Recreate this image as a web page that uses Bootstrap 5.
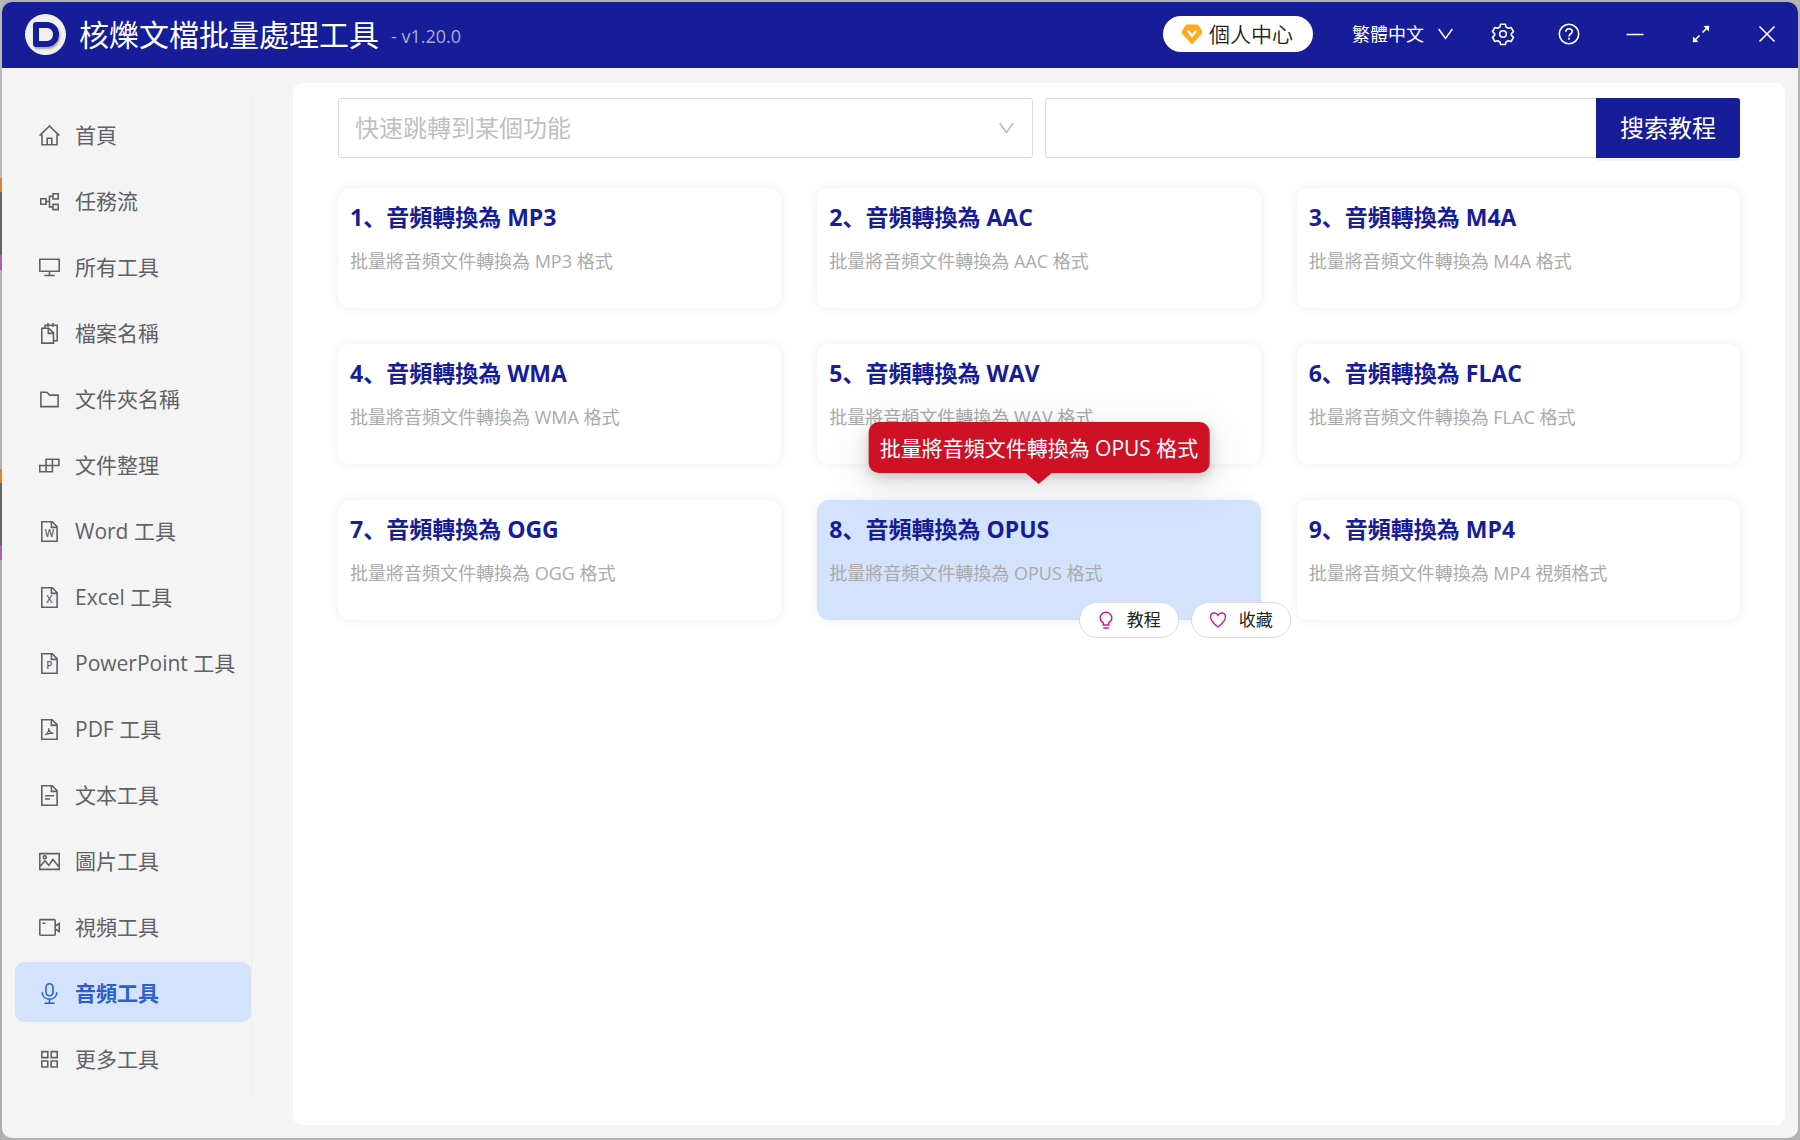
<!DOCTYPE html>
<html lang="zh">
<head>
<meta charset="utf-8">
<meta name="viewport" content="width=device-width, initial-scale=1">
<title>核爍文檔批量處理工具</title>
<link rel="stylesheet" href="https://cdn.jsdelivr.net/npm/bootstrap@5.3.0/dist/css/bootstrap.min.css">
<style>
  :root { --navy: #171c98; --soft-blue: #d3e2fd; --active-blue: #2b5fce; }
  body {
    font-family: "Open Sans", "Noto Sans CJK SC", "Noto Sans CJK TC", sans-serif;
    padding: 2px;
    color: #222;
    background: linear-gradient(#b8b8b8 0 178px, #e08030 178px 192px, #5f666c 192px 255px, #a860a8 255px 270px, #b2b2b2 270px 469px, #e08030 469px 483px, #5f666c 483px 545px, #a860a8 545px 560px, #adadad 560px) left / 2px 100% no-repeat, #b3b3b3;
  }
  svg { fill: none; stroke: currentColor; display: block; flex: none; }
  .app-window { min-height: calc(100vh - 4px); background: #f4f4f4; border-radius: 10px; overflow: hidden; }
  .title-bar { height: 66px; background: var(--navy); padding: 0 19px 2px 23px; }
  .logo-disc { width: 41px; height: 41px; background: #f0f0f0; }
  .logo-mark { width: 26px; height: 25px; border: 6px solid var(--navy); border-radius: 3px 12px 12px 3px; box-shadow: 1px 2px 2px #aaa; }
  .app-name { font-size: 30px; line-height: 42px; margin-left: 13px; padding-top: 2px; }
  .app-version { font-size: 18px; line-height: 24px; margin-left: 12px; padding-top: 4px; color: #a9acd8; }
  .member-btn { height: 36px; padding: 0 20px 0 19px; font-size: 21px; line-height: 30px; font-weight: 350; gap: 7px; border: 0; background: #fff; color: #222; }
  .lang-btn { font-size: 18px; line-height: 24px; gap: 14px; margin: 0 38px 0 39px; }
  .bar-tools { gap: 42px; }
  .bare-btn { background: none; border: 0; padding: 0; color: #fff; }
  .tool-btn { width: 24px; height: 24px; }
  .side-nav { width: 237px; margin: 30px 41px 0 13px; border-right: 1px solid #ececec; align-self: flex-start; padding-top: 6px; }
  .side-nav .nav-link { height: 60px; padding: 2px 8px 0 24px; gap: 15px; margin-bottom: 6px; font-size: 21px; line-height: 30px; color: #5f6166; border-radius: 9px; white-space: nowrap; }
  .side-nav .nav-link svg { stroke-width: 1.6; color: #5f6166; }
  .side-nav .nav-link.active { background: var(--soft-blue); color: var(--active-blue); font-weight: 700; }
  .side-nav .nav-link.active svg { color: var(--active-blue); }
  .main-panel { background: #fff; border-radius: 9px; margin: 15px 13px 13px 0; padding: 15px 45px; min-width: 0; }
  .search-row { gap: 12px; margin-bottom: 30px; }
  .search-row > * { flex: 1 1 50%; min-width: 0; }
  .search-row .form-select, .search-row .form-control { height: 60px; font-size: 24px; line-height: 34px; border: 1px solid #d9d9d9; border-radius: 3px; }
  .search-row .form-select {
    color: #bfbfbf; font-weight: 400; padding: 0 48px 0 16px;
    background-image: url("data:image/svg+xml,%3Csvg xmlns='http://www.w3.org/2000/svg' viewBox='0 0 15 12'%3E%3Cpath d='M.7 1l6.8 9.5L14.3 1' fill='none' stroke='%23b8b8b8' stroke-width='1.5'/%3E%3C/svg%3E");
    background-size: 15px 12px; background-position: right 18px center;
  }
  .search-row .btn { width: 144px; height: 60px; padding: 0; font-size: 24px; line-height: 34px; background: var(--navy); border: 0; border-radius: 0 3px 3px 0; color: #fff; box-shadow: 0 3px 0 #f5f5f5; }
  .tool-grid { --bs-gutter-x: 36px; --bs-gutter-y: 36px; }
  .tool-card { height: 120px; border: 0; border-radius: 12px; padding: 12px; box-shadow: 0 0 12px rgba(0,0,0,.07); }
  .tool-card h2 { font-size: 23px; line-height: 34px; font-weight: 700; color: var(--navy); margin: 0 0 13px; }
  .tool-card p { font-size: 18px; line-height: 28px; color: #aaa; margin: 0; }
  .tool-card.hovered { background: var(--soft-blue); }
  .card-actions { position: absolute; right: -30px; bottom: -18px; gap: 12px; z-index: 2; }
  .card-actions .btn { width: 100px; height: 36px; padding: 0; gap: 12px; font-size: 17px; line-height: 24px; border: 1px solid #d9d9d9; background: #fff; color: #222; }
  .card-actions svg { color: #c9189b; stroke-width: 1.4; }
  .red-tip { position: absolute; left: 50%; bottom: calc(100% + 27px); transform: translateX(-50%); height: 51px; padding: 0 11px; border-radius: 10px; background: #cf1126; color: #fff; font-size: 21px; line-height: 52px; white-space: nowrap; z-index: 3; box-shadow: 0 9px 42px 12px rgba(0,0,0,.05), 0 9px 24px rgba(0,0,0,.10), 0 4px 9px rgba(0,0,0,.10); }
  .red-tip::after { content: ""; position: absolute; left: 50%; top: 100%; margin-left: -13px; border: 13px solid transparent; border-top: 11px solid #cf1126; border-bottom: 0; }
  .file-letter { font: 600 10px "Open Sans", sans-serif; fill: currentColor; stroke: none; text-anchor: middle; }
</style>
</head>
<body>
<svg width="0" height="0" class="position-absolute" aria-hidden="true">
  <symbol id="page" viewBox="0 0 21 21"><path d="M2.8.8h10.4l4.9 4.9v14.5H2.8zM12.4.8v5.6h5.7"/></symbol>
</svg>
<div class="app-window d-flex flex-column">
  <header class="title-bar d-flex align-items-center text-white">
    <span class="logo-disc rounded-circle d-flex align-items-center justify-content-center"><span class="logo-mark"></span></span>
    <span class="app-name">核爍文檔批量處理工具</span>
    <span class="app-version">- v1.20.0</span>
    <button type="button" class="member-btn btn rounded-pill d-flex align-items-center ms-auto">
      <svg width="20" height="20" viewBox="0 0 20 20" aria-hidden="true"><path d="M4.2.5h11.6L20 6.6v3L10.4 20h-.8L0 9.6v-3z" fill="#ffa91f" stroke="none"/><path d="M5.8 6.8l4.2 5 4.2-5" stroke="#fff" stroke-width="2.4"/></svg>
      個人中心
    </button>
    <button type="button" class="bare-btn lang-btn d-flex align-items-center">繁體中文
      <svg width="15" height="12" viewBox="0 0 15 12" stroke-width="1.5" aria-hidden="true"><path d="M.7 1l6.8 9.5L14.3 1"/></svg>
    </button>
    <div class="bar-tools d-flex">
      <button type="button" class="bare-btn tool-btn" aria-label="設置"><svg width="24" height="24" viewBox="0 0 24 24" stroke-width="1.6" stroke-linejoin="round" aria-hidden="true"><circle cx="12" cy="12" r="3.3"/><path d="M9.6 2.2h4.8l.7 2.8 2.2 1.3 2.8-.8 2.4 4.1-2.1 2v1.8l2.1 2-2.4 4.1-2.8-.8-2.2 1.3-.7 2.5H9.6L8.9 20l-2.2-1.3-2.8.8-2.4-4.1 2.1-2v-1.8l-2.1-2 2.4-4.1 2.8.8L8.9 5z"/></svg></button>
      <button type="button" class="bare-btn tool-btn" aria-label="幫助"><svg width="24" height="24" viewBox="0 0 24 24" stroke-width="1.6" aria-hidden="true"><circle cx="12" cy="12" r="9.7"/><path d="M8.8 9.8c0-1.9 1.4-3 3.2-3s3.2 1.1 3.2 2.8c0 2.4-3.2 2.4-3.2 4.8M12 15.7v2"/></svg></button>
      <button type="button" class="bare-btn tool-btn" aria-label="最小化"><svg width="24" height="24" viewBox="0 0 24 24" stroke-width="1.6" aria-hidden="true"><path d="M3.5 12.5h17"/></svg></button>
      <button type="button" class="bare-btn tool-btn" aria-label="最大化"><svg width="24" height="24" viewBox="0 0 24 24" stroke-width="1.6" aria-hidden="true"><path d="M13.5 10.5l5-5M10.5 13.5l-5 5"/><path d="M14.5 4l5.7-.3-.3 5.8zM9.5 20l-5.7.3.3-5.8z" fill="currentColor" stroke="none"/></svg></button>
      <button type="button" class="bare-btn tool-btn" aria-label="關閉"><svg width="24" height="24" viewBox="0 0 24 24" stroke-width="1.6" aria-hidden="true"><path d="M4.5 4.5l15 15M19.5 4.5l-15 15"/></svg></button>
    </div>
  </header>

  <div class="d-flex flex-grow-1">
    <nav class="side-nav nav flex-column flex-shrink-0">
      <a href="#" class="nav-link d-flex align-items-center"><svg width="21" height="21" viewBox="0 0 21 21"><path d="M.6 10.6L10.5 1l9.9 9.6M3 9.5v10.3h15V9.5M8.2 19.8v-6.6h4.6v6.6"/></svg>首頁</a>
      <a href="#" class="nav-link d-flex align-items-center"><svg width="21" height="21" viewBox="0 0 21 21"><path d="M1.8 7.8H7v5.4H1.8zM14 2.8h5.2V8H14zM14 13.4h5.2v5.2H14zM7 10.5h3M14 5.3h-3.5v10.6H14"/></svg>任務流</a>
      <a href="#" class="nav-link d-flex align-items-center"><svg width="21" height="21" viewBox="0 0 21 21"><path d="M.8 2.3h19.4v12H.8zM10.5 14.3v4M5.3 18.5h10.4"/></svg>所有工具</a>
      <a href="#" class="nav-link d-flex align-items-center"><svg width="21" height="21" viewBox="0 0 21 21"><path d="M2.8 5.2h7l4.7 4.7v10.2H2.8zM9.3 5.2v5.2h5.2M6 5V2.2h12.2v15.5h-3.7M9 0v4M14 0v4"/></svg>檔案名稱</a>
      <a href="#" class="nav-link d-flex align-items-center"><svg width="21" height="21" viewBox="0 0 21 21"><path d="M1.9 3.2h5.9l3 2.9h8.3v11.5H1.9z"/></svg>文件夾名稱</a>
      <a href="#" class="nav-link d-flex align-items-center"><svg width="21" height="21" viewBox="0 0 21 21"><path d="M.8 10.5h12.6v6.3H.8zM7.1 4.2h12.8v6.3H7.1zM7.1 10.5v6.3M13.4 4.2v6.3"/></svg>文件整理</a>
      <a href="#" class="nav-link d-flex align-items-center"><svg width="21" height="21" viewBox="0 0 21 21"><use href="#page"/><text class="file-letter" x="10.4" y="16">W</text></svg>Word 工具</a>
      <a href="#" class="nav-link d-flex align-items-center"><svg width="21" height="21" viewBox="0 0 21 21"><use href="#page"/><text class="file-letter" x="10.4" y="16">X</text></svg>Excel 工具</a>
      <a href="#" class="nav-link d-flex align-items-center"><svg width="21" height="21" viewBox="0 0 21 21"><use href="#page"/><text class="file-letter" x="10.4" y="16">P</text></svg>PowerPoint 工具</a>
      <a href="#" class="nav-link d-flex align-items-center"><svg width="21" height="21" viewBox="0 0 21 21"><use href="#page"/><path stroke-width="1.3" d="M9.8 9c.3 3-1 5.5-3.8 7M9.9 10.8c.6 2 2 3.5 4.6 3.6-3-.3-5 .1-7 .8"/></svg>PDF 工具</a>
      <a href="#" class="nav-link d-flex align-items-center"><svg width="21" height="21" viewBox="0 0 21 21"><use href="#page"/><path d="M6 10.7h9M6 14h5"/></svg>文本工具</a>
      <a href="#" class="nav-link d-flex align-items-center"><svg width="21" height="21" viewBox="0 0 21 21"><path d="M.8 2.6h19.4v15.8H.8zM1.5 15l4.4-5.3 4 4.7 4-6 5.6 6.8"/><circle cx="5.8" cy="6.3" r="1.5"/></svg>圖片工具</a>
      <a href="#" class="nav-link d-flex align-items-center"><svg width="21" height="21" viewBox="0 0 21 21"><rect x=".8" y="2.6" width="15.4" height="15.6" rx="1"/><path d="M3.5 6.3h3M16.2 9l4-2.5v8L16.2 12"/></svg>視頻工具</a>
      <a href="#" class="nav-link active d-flex align-items-center" aria-current="page"><svg width="21" height="21" viewBox="0 0 21 21"><rect x="7" y=".8" width="7" height="12" rx="3.5"/><path d="M3.2 9.2c0 4.2 3 7 7.3 7s7.3-2.8 7.3-7M10.5 16.2v4M5.5 20.2h10"/></svg>音頻工具</a>
      <a href="#" class="nav-link d-flex align-items-center"><svg width="21" height="21" viewBox="0 0 21 21"><path d="M2.8 2.6h6v6h-6zM12.2 2.6h6v6h-6zM2.8 12h6v6h-6zM12.2 12h6v6h-6z"/></svg>更多工具</a>
    </nav>

    <main class="main-panel flex-grow-1">
      <div class="search-row d-flex">
        <select class="form-select" aria-label="快速跳轉到某個功能"><option>快速跳轉到某個功能</option></select>
        <form class="input-group flex-nowrap">
          <input type="text" class="form-control" aria-label="搜索教程">
          <button type="button" class="btn">搜索教程</button>
        </form>
      </div>
      <div class="tool-grid row row-cols-3">
        <div class="col"><article class="tool-card card"><h2>1、音頻轉換為 MP3</h2><p>批量將音頻文件轉換為 MP3 格式</p></article></div>
        <div class="col"><article class="tool-card card"><h2>2、音頻轉換為 AAC</h2><p>批量將音頻文件轉換為 AAC 格式</p></article></div>
        <div class="col"><article class="tool-card card"><h2>3、音頻轉換為 M4A</h2><p>批量將音頻文件轉換為 M4A 格式</p></article></div>
        <div class="col"><article class="tool-card card"><h2>4、音頻轉換為 WMA</h2><p>批量將音頻文件轉換為 WMA 格式</p></article></div>
        <div class="col"><article class="tool-card card"><h2>5、音頻轉換為 WAV</h2><p>批量將音頻文件轉換為 WAV 格式</p></article></div>
        <div class="col"><article class="tool-card card"><h2>6、音頻轉換為 FLAC</h2><p>批量將音頻文件轉換為 FLAC 格式</p></article></div>
        <div class="col"><article class="tool-card card"><h2>7、音頻轉換為 OGG</h2><p>批量將音頻文件轉換為 OGG 格式</p></article></div>
        <div class="col"><article class="tool-card card hovered"><h2>8、音頻轉換為 OPUS</h2><p>批量將音頻文件轉換為 OPUS 格式</p>
          <div class="red-tip" role="tooltip">批量將音頻文件轉換為 OPUS 格式</div>
          <div class="card-actions d-flex">
            <button type="button" class="btn rounded-pill d-flex align-items-center justify-content-center"><svg width="18" height="18" viewBox="0 0 18 18" aria-hidden="true"><path d="M6.2 14v-2.4C4.3 10.7 3.2 9 3.2 7a5.8 5.8 0 0 1 11.6 0c0 2-1.1 3.7-3 4.6V14zM6.2 17h5.6"/></svg>教程</button>
            <button type="button" class="btn rounded-pill d-flex align-items-center justify-content-center"><svg width="18" height="18" viewBox="0 0 18 18" aria-hidden="true"><path d="M9 16C5 12.8 1.5 9.8 1.5 6c0-2.4 1.7-4 3.8-4C7 2 8.3 2.9 9 4.3 9.7 2.9 11 2 12.7 2c2.1 0 3.800 1.600 3.800 4 0 3.800-3.500 6.800-7.500 10z"/></svg>收藏</button>
          </div>
        </article></div>
        <div class="col"><article class="tool-card card"><h2>9、音頻轉換為 MP4</h2><p>批量將音頻文件轉換為 MP4 視頻格式</p></article></div>
      </div>
    </main>
  </div>
</div>
<script src="https://cdn.jsdelivr.net/npm/bootstrap@5.3.0/dist/js/bootstrap.bundle.min.js"></script>
</body>
</html>
